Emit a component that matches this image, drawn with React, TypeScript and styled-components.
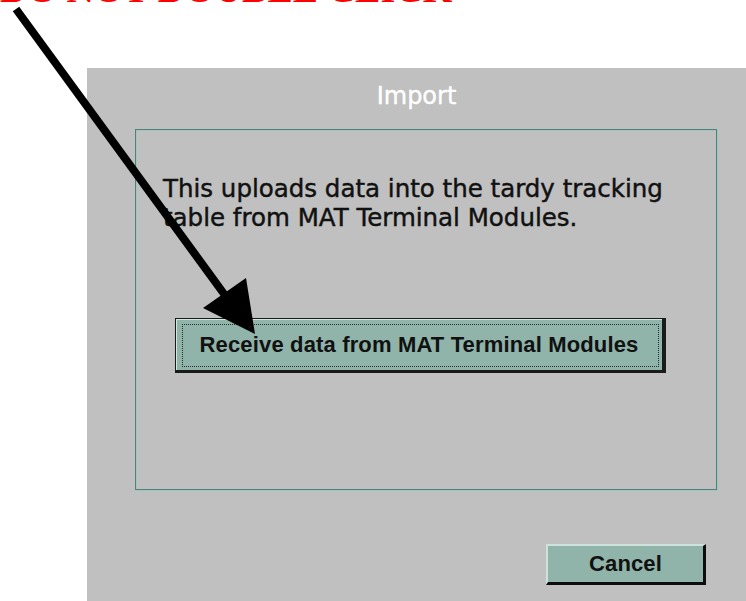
import React from 'react';
import styled, { createGlobalStyle } from 'styled-components';

const GlobalStyle = createGlobalStyle`
    html, body {
        margin: 0;
        padding: 0;
        background: #ffffff;
        overflow: hidden;
    }
`

const Page = styled.div`
    position: relative;
    width: 746px;
    height: 601px;
    overflow: hidden;
    background: #ffffff;
`

const Warning = styled.h1`
    margin: -30px 0 0 0;
    font-family: "Liberation Serif", "Times New Roman", serif;
    font-weight: bold;
    font-size: 38px;
    line-height: 38px;
    color: #ff0000;
    white-space: nowrap;
`

const Dialog = styled.div`
    margin: 60px 0 0 87px;
    width: 659px;
    height: 533px;
    background: #c0c0c0;
    display: flex;
    flex-direction: column;
    box-sizing: border-box;
    padding-top: 16px;
`

const TitleBar = styled.div`
    font-family: "DejaVu Sans", Verdana, sans-serif;
    font-size: 24px;
    line-height: 24px;
    color: #ffffff;
    -webkit-text-stroke: 0.4px #ffffff;
    text-align: center;
`

// grooved teal frame around the dialog body
const Frame = styled.div`
    margin: 21px 0 0 48px;
    width: 582px;
    height: 361px;
    box-sizing: border-box;
    border: 1px solid #4f8279;
    box-shadow: inset 1px 1px 0 #9fc5bd, 1px 1px 0 #9fc5bd;
    padding: 44px 0 0 27px;
    display: flex;
    flex-direction: column;
    align-items: flex-start;
`

const Message = styled.p`
    margin: 0;
    font-family: "DejaVu Sans", Verdana, sans-serif;
    font-size: 24.5px;
    line-height: 29px;
    color: #111111;
    -webkit-text-stroke: 0.45px #111111;
`

const Button = styled.button<{ $wide?: boolean }>`
    position: relative;
    box-sizing: border-box;
    width: ${p => (p.$wide ? '491px' : '160px')};
    height: ${p => (p.$wide ? '55px' : '41px')};
    margin: 0;
    padding: 0;
    background: #90b4a9;
    font-family: "Liberation Sans", Arial, sans-serif;
    font-weight: bold;
    font-size: 22px;
    letter-spacing: 0.15px;
    color: #111111;
    cursor: pointer;
    border-style: solid;
    border-color: ${p => (p.$wide ? '#1a1a1a' : '#cde2db #0d0d0d #0d0d0d #cde2db')};
    border-width: ${p => (p.$wide ? '1px 4px 3px 1px' : '2px 3px 3px 2px')};
    box-shadow: ${p => (p.$wide ? 'inset 1px 1px 0 #d3e6df' : 'none')};

    &::after {
        content: '';
        display: ${p => (p.$wide ? 'block' : 'none')};
        position: absolute;
        inset: 5px 3px 3px 6px;
        border: 1px dotted #2a2a2a;
    }
`

const ActionRow = styled.div`
    margin: 86px 0 0 12px;
`

const Footer = styled.div`
    display: flex;
    justify-content: flex-end;
    padding-right: 40px;
    margin-top: 54px;
`

const Pointer = styled.svg`
    position: absolute;
    left: 0;
    top: 0;
    pointer-events: none;
`

function App() {
    return (
        <Page>
            <GlobalStyle />
            <Warning>DO NOT DOUBLE CLICK</Warning>
            <Dialog>
                <TitleBar>Import</TitleBar>
                <Frame>
                    <Message>
                        This uploads data into the tardy tracking<br />
                        table from MAT Terminal Modules.
                    </Message>
                    <ActionRow>
                        <Button $wide>Receive data from MAT Terminal Modules</Button>
                    </ActionRow>
                </Frame>
                <Footer>
                    <Button>Cancel</Button>
                </Footer>
            </Dialog>
            {/* big pointer arrow drawn over the dialog */}
            <Pointer width="746" height="601" viewBox="0 0 746 601">
                <line x1="16" y1="9" x2="227" y2="298" stroke="#000" strokeWidth="8" />
                <polygon points="203,308 246,278 255,334" fill="#000" />
            </Pointer>
        </Page>
    );
}

export default App;
